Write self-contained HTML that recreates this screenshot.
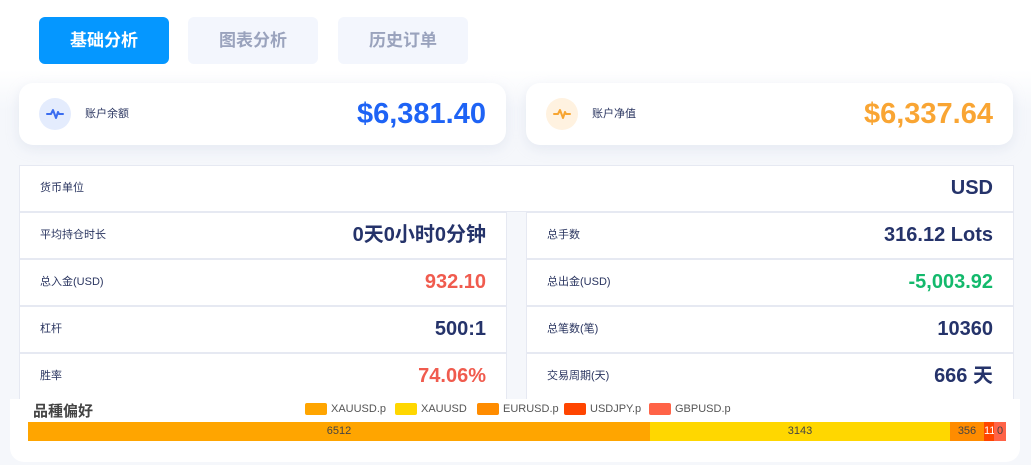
<!DOCTYPE html>
<html><head><meta charset="utf-8"><style>
*{margin:0;padding:0;box-sizing:border-box}
body{width:1031px;height:465px;background:linear-gradient(#fff 0,#fff 70px,#f5f7fb 110px);font-family:"Liberation Sans","Noto Sans CJK SC",sans-serif;position:relative;overflow:hidden}
.tab{position:absolute;top:17px;width:130px;height:47px;border-radius:6px;font-size:17px;font-weight:bold;text-align:center;line-height:47px;color:#9aa3bd;background:#f3f6fd}
.card{position:absolute;top:83px;height:62px;background:#fff;border-radius:14px;box-shadow:0 4px 12px rgba(200,210,225,.35)}
.ic{position:absolute;left:20px;top:15px;width:32px;height:32px;border-radius:50%}
.cl{position:absolute;left:66px;top:23px;font-size:11px;color:#2a3560;line-height:16px}
.cv{position:absolute;right:20px;top:14px;font-size:29px;font-weight:bold;line-height:34px}
.row{position:absolute;height:47px;background:#fff;border:1px solid #e6e9f2}
.row .l{position:absolute;left:20px;top:0;line-height:45px;font-size:11px;color:#2a3560}
.row .v{position:absolute;right:20px;top:0;line-height:45px;font-size:20px;font-weight:bold;color:#25336a}
.bot{position:absolute;left:10px;top:399px;width:1010px;height:63px;background:#fff;border-radius:0 0 14px 14px}
.leg{position:absolute;top:403px;font-size:11px;color:#555;line-height:13px}
.leg i{display:inline-block;width:22px;height:12px;border-radius:2px;vertical-align:middle;margin-right:4px}
.seg{position:absolute;top:422px;height:19px;font-size:11px;color:#444;text-align:center;line-height:19px;overflow:hidden}
</style></head><body>
<div class="tab" style="left:39px;background:#0597ff;color:#fff">基础分析</div>
<div class="tab" style="left:188px">图表分析</div>
<div class="tab" style="left:338px">历史订单</div>

<div class="card" style="left:19px;width:487px">
<div class="ic" style="background:#e4ecfd"><svg width="32" height="32" viewBox="0 0 32 32"><path d="M8 16h4l2-4 3 8 2-6 1 2h4" fill="none" stroke="#3b6df0" stroke-width="2" stroke-linejoin="round" stroke-linecap="round"/></svg></div>
<div class="cl">账户余额</div><div class="cv" style="color:#1e63f5">$6,381.40</div></div>
<div class="card" style="left:526px;width:487px">
<div class="ic" style="background:#fff2e0"><svg width="32" height="32" viewBox="0 0 32 32"><path d="M8 16h4l2-4 3 8 2-6 1 2h4" fill="none" stroke="#f7a531" stroke-width="2" stroke-linejoin="round" stroke-linecap="round"/></svg></div>
<div class="cl">账户净值</div><div class="cv" style="color:#f9a533">$6,337.64</div></div>

<div class="row" style="left:19px;top:165px;width:995px"><span class="l">货币单位</span><span class="v">USD</span></div>
<div class="row" style="left:19px;top:212px;width:488px"><span class="l">平均持仓时长</span><span class="v">0天0小时0分钟</span></div>
<div class="row" style="left:19px;top:259px;width:488px"><span class="l">总入金(USD)</span><span class="v" style="color:#f05b4e">932.10</span></div>
<div class="row" style="left:19px;top:306px;width:488px"><span class="l">杠杆</span><span class="v">500:1</span></div>
<div class="row" style="left:19px;top:353px;width:488px"><span class="l">胜率</span><span class="v" style="color:#f05b4e">74.06%</span></div>
<div class="row" style="left:526px;top:212px;width:488px"><span class="l">总手数</span><span class="v">316.12 Lots</span></div>
<div class="row" style="left:526px;top:259px;width:488px"><span class="l">总出金(USD)</span><span class="v" style="color:#13b96c">-5,003.92</span></div>
<div class="row" style="left:526px;top:306px;width:488px"><span class="l">总笔数(笔)</span><span class="v">10360</span></div>
<div class="row" style="left:526px;top:353px;width:488px"><span class="l">交易周期(天)</span><span class="v">666 天</span></div>

<div class="bot"></div>
<div style="position:absolute;left:33px;top:400px;font-size:15px;font-weight:bold;color:#444">品種偏好</div>
<div class="leg" style="left:305px"><i style="background:#ffa500"></i>XAUUSD.p</div>
<div class="leg" style="left:395px"><i style="background:#ffd700"></i>XAUUSD</div>
<div class="leg" style="left:477px"><i style="background:#ff8c00"></i>EURUSD.p</div>
<div class="leg" style="left:564px"><i style="background:#ff4500"></i>USDJPY.p</div>
<div class="leg" style="left:649px"><i style="background:#ff6347"></i>GBPUSD.p</div>
<div class="seg" style="left:28px;width:622px;background:#ffa500">6512</div>
<div class="seg" style="left:650px;width:300px;background:#ffd700">3143</div>
<div class="seg" style="left:950px;width:34px;background:#ff8c00">356</div>
<div class="seg" style="left:984px;width:10px;background:#ff4500;color:#fff">11</div>
<div class="seg" style="left:994px;width:12px;background:#ff6347">0</div>
</body></html>
